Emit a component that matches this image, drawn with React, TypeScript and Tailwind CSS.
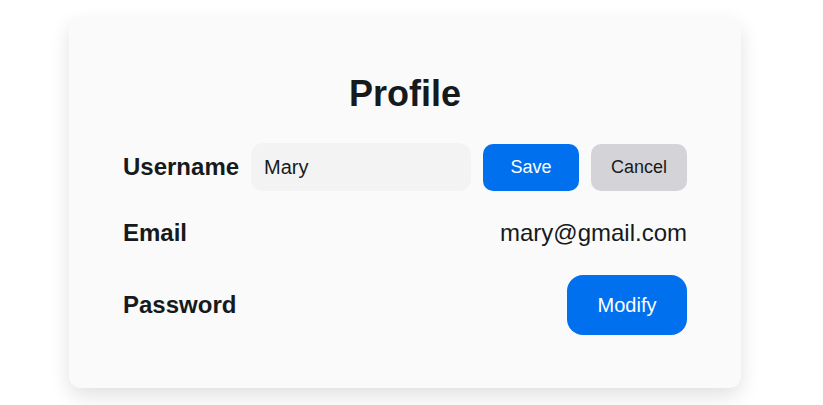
export default function App() {
  return (
    <div
      className="min-h-[405px] bg-white flex justify-center pt-[17px] pr-[13px]"
      style={{ fontFamily: '"Liberation Sans", Arial, sans-serif' }}
    >
      <div className="w-[672px] h-[371px] bg-[#fafafa] rounded-xl shadow-[0_8px_20px_rgba(0,0,0,0.12)] px-[54px] pt-[70px] text-[#161a1d]">
        <h1 className="text-[36px] font-bold leading-none text-center -mt-[15px] h-[43px] flex items-center justify-center">
          Profile
        </h1>

        <div className="mt-[28px] flex items-center gap-3 h-12">
          <span className="text-2xl font-bold">Username</span>
          <input
            defaultValue="Mary"
            className="flex-1 min-w-0 h-12 rounded-xl bg-[#f3f3f3] px-[13px] text-[20px] text-[#161a1d] outline-none"
          />
          <button className="w-24 h-[47px] rounded-[10px] bg-[#0070ef] text-white text-lg">
            Save
          </button>
          <button className="w-24 h-[47px] rounded-[10px] bg-[#d4d4d8] text-[#161a1d] text-lg">
            Cancel
          </button>
        </div>

        <div className="mt-7 flex items-center justify-between h-7">
          <span className="text-2xl font-bold">Email</span>
          <span className="text-2xl">mary@gmail.com</span>
        </div>

        <div className="mt-7 flex items-center justify-between h-[60px]">
          <span className="text-2xl font-bold">Password</span>
          <button className="w-[120px] h-[60px] rounded-2xl bg-[#0070ef] text-white text-[20px]">
            Modify
          </button>
        </div>
      </div>
    </div>
  );
}
